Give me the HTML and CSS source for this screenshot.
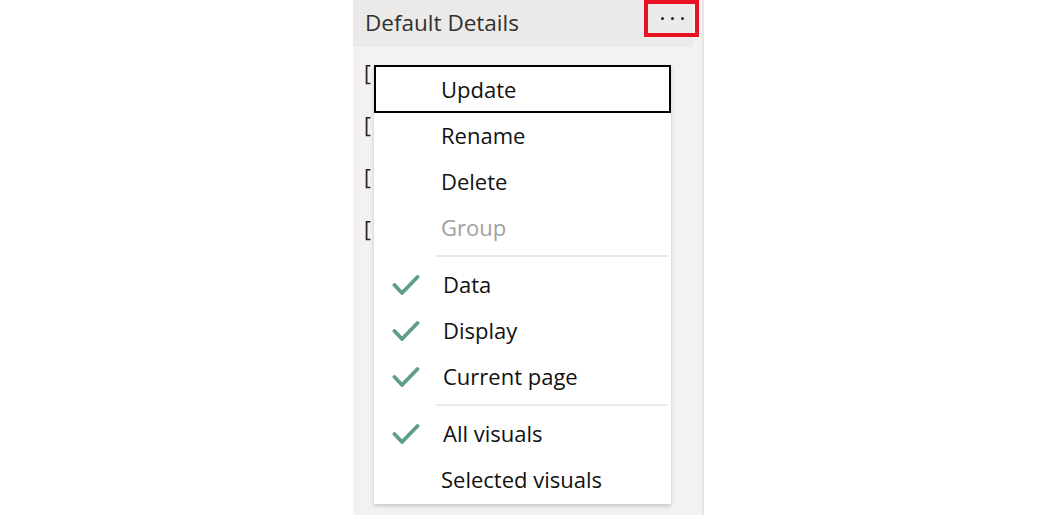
FILE: index.html
```html
<!DOCTYPE html>
<html>
<head>
<meta charset="utf-8">
<link rel="stylesheet" href="styles.css">
</head>
<body>
<div class="stage">
  <div class="panel">
    <div class="header">
      <span class="title">Default Details</span>
    </div>
    <div class="more-box"><span class="dot"></span><span class="dot"></span><span class="dot"></span></div>
    <div class="rows">
      <div class="row">[</div>
      <div class="row">[</div>
      <div class="row">[</div>
      <div class="row">[</div>
    </div>
    <div class="menu">
      <div class="item focused"><span class="label">Update</span></div>
      <div class="item"><span class="label">Rename</span></div>
      <div class="item"><span class="label">Delete</span></div>
      <div class="item disabled"><span class="label">Group</span></div>
      <div class="sep"></div>
      <div class="item checked"><svg class="check" viewBox="0 0 28 22" width="28" height="22"><polyline points="2.5,11 10,19 25.5,3" fill="none" stroke="#5e9e88" stroke-width="3.8" stroke-linecap="round" stroke-linejoin="round"/></svg><span class="label">Data</span></div>
      <div class="item checked"><svg class="check" viewBox="0 0 28 22" width="28" height="22"><polyline points="2.5,11 10,19 25.5,3" fill="none" stroke="#5e9e88" stroke-width="3.8" stroke-linecap="round" stroke-linejoin="round"/></svg><span class="label">Display</span></div>
      <div class="item checked"><svg class="check" viewBox="0 0 28 22" width="28" height="22"><polyline points="2.5,11 10,19 25.5,3" fill="none" stroke="#5e9e88" stroke-width="3.8" stroke-linecap="round" stroke-linejoin="round"/></svg><span class="label">Current page</span></div>
      <div class="sep"></div>
      <div class="item checked"><svg class="check" viewBox="0 0 28 22" width="28" height="22"><polyline points="2.5,11 10,19 25.5,3" fill="none" stroke="#5e9e88" stroke-width="3.8" stroke-linecap="round" stroke-linejoin="round"/></svg><span class="label">All visuals</span></div>
      <div class="item"><span class="label">Selected visuals</span></div>
    </div>
  </div>
</div>
</body>
</html>
```

FILE: styles.css
```css
html, body {
  margin: 0;
  padding: 0;
  background: #ffffff;
}
body {
  font-family: "Open Sans", "Noto Sans", sans-serif;
  width: 1057px;
  height: 515px;
  overflow: hidden;
}
.stage {
  display: flex;
  padding-left: 353px;
  height: 515px;
}
.panel {
  position: relative;
  width: 349px;
  height: 515px;
  background: #f3f2f1;
  border-right: 2px solid #e6e5e4;
}
.header {
  width: 340px;
  height: 47px;
  background: #ebeae9;
  display: flex;
  align-items: center;
  padding-left: 12px;
  box-sizing: border-box;
}
.title {
  font-size: 22.5px;
  color: #323130;
  margin-top: -2px;
}
.more-box {
  position: absolute;
  left: 291px;
  top: 0;
  width: 55px;
  height: 37px;
  box-sizing: border-box;
  border: 4px solid #e81123;
  display: flex;
  align-items: center;
  justify-content: center;
  gap: 7px;
  padding-left: 1px;
  padding-bottom: 1px;
}
.dot {
  width: 3px;
  height: 3px;
  border-radius: 50%;
  background: #252423;
}
.rows {
  padding: 14px 0 0 11px;
  display: flex;
  flex-direction: column;
  gap: 28px;
}
.row {
  font-size: 21px;
  line-height: 24px;
  height: 24px;
  color: #252423;
}
.menu {
  position: absolute;
  left: 21px;
  top: 66px;
  width: 297px;
  background: #ffffff;
  box-shadow: 0 1.6px 4px rgba(0,0,0,0.18), 0 0.3px 1px rgba(0,0,0,0.12);
  padding-bottom: 2px;
  display: flex;
  flex-direction: column;
}
.item {
  height: 46px;
  display: flex;
  align-items: center;
  padding-left: 67px;
  box-sizing: border-box;
  font-size: 22px;
  color: #111111;
  position: relative;
}
.item.focused {
  outline: 2px solid #000000;
  outline-offset: -1px;
  margin: 0 1px;
  padding-left: 66px;
}
.item.disabled {
  color: #a19f9d;
}
.item.checked {
  padding-left: 69px;
}
.check {
  position: absolute;
  left: 18px;
  top: 13px;
}
.label {
  margin-top: -1px;
}
.sep {
  height: 2px;
  background: #ebeae9;
  margin: 5px 3px 4px 62px;
}
```
